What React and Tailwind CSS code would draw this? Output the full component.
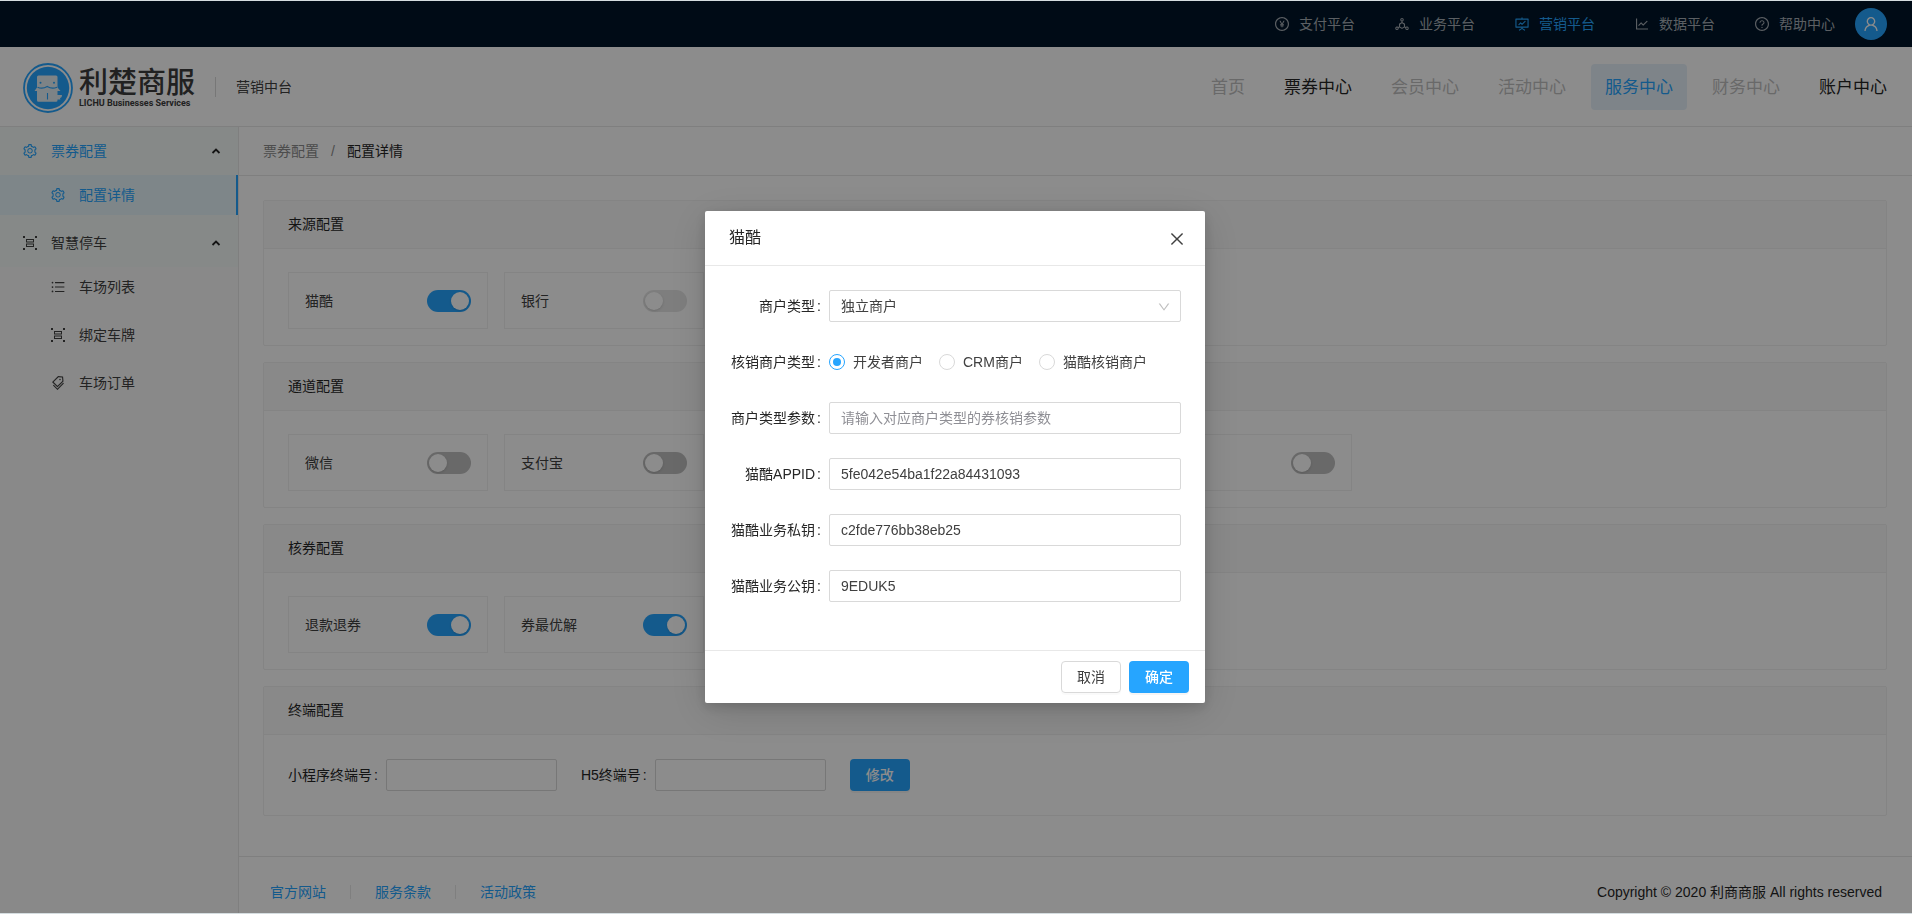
import { useState } from "react";
import {
  AiOutlineClose,
  AiOutlineDeploymentUnit,
  AiOutlineDown,
  AiOutlineFundProjectionScreen,
  AiOutlineLineChart,
  AiOutlinePayCircle,
  AiOutlineQuestionCircle,
  AiOutlineSetting,
  AiOutlineTags,
  AiOutlineUnorderedList,
  AiOutlineUser,
} from "react-icons/ai";

// 车牌识别图标：四角定位点 + 两行条形
function PlateIcon({ className }) {
  return (
    <svg viewBox="0 0 16 16" className={className} fill="currentColor">
      <path d="M1 1h2v2H1zM13 1h2v2h-2zM1 13h2v2H1zM13 13h2v2h-2z" />
      <path d="M4 4h8v3.400H4zM5 5v1.400h6V5zM4 8.600h8V12H4zM5 9.600V11h6V9.600z" fillRule="evenodd" />
    </svg>
  );
}

const PLATFORMS = [
  { name: "支付平台", icon: AiOutlinePayCircle },
  { name: "业务平台", icon: AiOutlineDeploymentUnit },
  { name: "营销平台", icon: AiOutlineFundProjectionScreen, active: true },
  { name: "数据平台", icon: AiOutlineLineChart },
  { name: "帮助中心", icon: AiOutlineQuestionCircle },
];

const NAV = [
  { name: "首页", disabled: true },
  { name: "票券中心" },
  { name: "会员中心", disabled: true },
  { name: "活动中心", disabled: true },
  { name: "服务中心", active: true },
  { name: "财务中心", disabled: true },
  { name: "账户中心" },
];

const MENU = [
  {
    name: "票券配置",
    icon: AiOutlineSetting,
    active: true,
    items: [{ name: "配置详情", icon: AiOutlineSetting, active: true }],
  },
  {
    name: "智慧停车",
    icon: PlateIcon,
    items: [
      { name: "车场列表", icon: AiOutlineUnorderedList },
      { name: "绑定车牌", icon: PlateIcon },
      { name: "车场订单", icon: AiOutlineTags },
    ],
  },
];

const SECTIONS = [
  {
    title: "来源配置",
    switches: [
      { id: "maoku", name: "猫酷", on: true },
      { id: "bank", name: "银行", disabled: true },
    ],
  },
  {
    title: "通道配置",
    switches: [
      { id: "wechat", name: "微信" },
      { id: "alipay", name: "支付宝" },
      { id: "channel-3" },
      { id: "channel-4" },
      { id: "channel-5" },
    ],
  },
  {
    title: "核券配置",
    switches: [
      { id: "refund", name: "退款退券", on: true },
      { id: "best", name: "券最优解", on: true },
    ],
  },
];

const VERIFY_TYPES = ["开发者商户", "CRM商户", "猫酷核销商户"];

function Logo() {
  return (
    <a href="#" className="flex items-center gap-[6px] pt-[2px] text-[#3c3c3c]">
      <svg viewBox="0 0 50 50" className="size-[50px]">
        <circle cx="25" cy="25" r="24" fill="none" stroke="#26a5ff" strokeWidth="1.8" />
        <circle cx="25" cy="25" r="21.2" fill="#26a5ff" />
        <path
          fill="#e4eef4"
          d="M15.500 12.500h17.500a1.500 1.500 0 0 1 1.500 1.500v10.500l3 3.500h-3v4h4.500c0 2-.8 2.700-2 3l.4 1.500h-2.900v.7a1.500 1.500 0 0 1-1.500 1.500H15.500a1.500 1.500 0 0 1-1.500-1.500V28h-2.500l2.500-3.500V14a1.500 1.500 0 0 1 1.500-1.500z"
        />
        <circle cx="17.500" cy="19.800" r="1" fill="#26a5ff" />
        <circle cx="31" cy="19.800" r="1" fill="#26a5ff" />
        <path
          d="M14.500 24.200c3.500 1.500 6.500 1.200 9.700-.7 3.200 1.900 6.300 2.200 9.800.7M24.500 30v6.500"
          fill="none"
          stroke="#26a5ff"
          strokeWidth="1.100"
        />
      </svg>
      <span className="flex flex-col">
        <span className="text-[29px] leading-[32px] font-medium">利楚商服</span>
        <span className="font-[Roboto,sans-serif] text-[9px] leading-[9px] font-bold">LICHU Businesses Services</span>
      </span>
    </a>
  );
}

function Chevron() {
  return (
    <svg viewBox="0 0 10 6" className="h-[6px] w-[10px] text-[#262626]">
      <path d="M1.500 5 5 1.500 8.500 5" fill="none" stroke="currentColor" strokeWidth="1.800" />
    </svg>
  );
}

function TopBar() {
  return (
    <div className="flex h-[46px] shrink-0 items-center justify-end gap-10 bg-[#001529] pr-[25px]">
      {PLATFORMS.map(({ name, icon: Icon, active }) => (
        <a
          key={name}
          href="#"
          className={`flex items-center gap-[10px] ${active ? "text-[#26a5ff]" : "text-[#a6adb4]"}`}
        >
          <Icon className="-m-px size-4" />
          {name}
        </a>
      ))}
      <button
        aria-label="用户"
        className="-ml-5 flex size-8 items-center justify-center rounded-full bg-[#26a5ff] text-lg text-white"
      >
        <AiOutlineUser />
      </button>
    </div>
  );
}

function Header() {
  return (
    <header className="flex h-20 shrink-0 items-center border-b border-[#e8e8e8] bg-white pr-[11px] pl-[23px]">
      <Logo />
      <span className="ml-5 h-5 w-px bg-[#d9d9d9]" />
      <span className="ml-5 text-[#404040]">营销中台</span>
      <nav className="ml-auto flex gap-[11px] text-[17px]">
        {NAV.map(({ name, active, disabled }) => (
          <a
            key={name}
            href="#"
            className={`flex h-[46px] items-center rounded px-[14px] pt-[2px] ${
              active ? "bg-[#e6f1fa] text-[#26a5ff]" : disabled ? "text-[#bfbfbf]" : "text-[#262626]"
            }`}
          >
            {name}
          </a>
        ))}
      </nav>
    </header>
  );
}

function Sidebar() {
  return (
    <aside className="w-[239px] shrink-0 border-r border-[#e8e8e8] bg-[#fafafa]">
      {MENU.map(({ name, icon: Icon, active, items }) => (
        <div key={name}>
          <button
            className={`flex h-12 w-full items-center bg-[#f4faf8] pr-[17px] pl-[23px] ${
              active ? "text-[#26a5ff]" : "text-[#404040]"
            }`}
          >
            <Icon className="-m-px size-4" />
            <span className="mr-auto ml-[14px]">{name}</span>
            <Chevron />
          </button>
          <ul className={active ? "bg-[#f4faf8] pb-1" : "flex flex-col gap-2"}>
            {items.map((item) => (
              <li key={item.name}>
                <a
                  href="#"
                  className={`flex h-10 items-center gap-[14px] pl-[51px] ${
                    item.active ? "border-r-2 border-[#26a5ff] bg-[#e6f5f9] text-[#26a5ff]" : "text-[#404040]"
                  }`}
                >
                  <item.icon className="-m-px size-4" />
                  {item.name}
                </a>
              </li>
            ))}
          </ul>
        </div>
      ))}
    </aside>
  );
}

function Switch({ on, disabled }) {
  let track = "bg-[#bfbfbf]";
  if (on) track = "bg-[#26a5ff]";
  if (disabled) track = "bg-[#e5e5e5]";
  return (
    <span className={`flex h-[22px] w-11 items-center rounded-full p-[2px] ${track}`}>
      <span className={`size-[18px] rounded-full bg-white shadow-sm ${on ? "ml-auto" : ""}`} />
    </span>
  );
}

function SwitchBox({ name, on, disabled }) {
  const [checked, setChecked] = useState(!!on);
  return (
    <label className="flex h-[57px] w-[200px] items-center justify-between border border-[#f0f0f0] px-4 text-[#404040]">
      <span>{name}</span>
      <input
        type="checkbox"
        className="sr-only"
        checked={checked}
        disabled={disabled}
        onChange={(e) => setChecked(e.target.checked)}
      />
      <Switch on={checked} disabled={disabled} />
    </label>
  );
}

function Section({ title, children }) {
  return (
    <section className="rounded-xs border border-[#f0f0f0] bg-white">
      <h2 className="flex h-12 items-center border-b border-[#f0f0f0] bg-[#fafafa] px-6 pb-[2px] text-[#262626]">
        {title}
      </h2>
      {children}
    </section>
  );
}

function TerminalField({ id, label }) {
  return (
    <div className="flex items-center">
      <label htmlFor={id} className="text-[#262626]">
        {label}
        <span className="mr-2 ml-[2px]">:</span>
      </label>
      <input id={id} className="h-8 w-[171px] rounded-xs border border-[#d9d9d9] px-[11px]" />
    </div>
  );
}

function Footer() {
  return (
    <footer className="mt-auto flex h-[57px] items-center justify-between border-t border-[#e8e8e8] pt-[14px] pr-[30px] pl-[31px]">
      <div className="flex items-center gap-6 text-[#26a5ff]">
        <a href="#">官方网站</a>
        <span className="h-[14px] w-px bg-[#e8e8e8]" />
        <a href="#">服务条款</a>
        <span className="h-[14px] w-px bg-[#e8e8e8]" />
        <a href="#">活动政策</a>
      </div>
      <p className="text-[#262626]">Copyright © 2020 利商商服 All rights reserved</p>
    </footer>
  );
}

function FormRow({ id, label, children }) {
  return (
    <div className="flex h-8 items-center">
      <label htmlFor={id} className="w-[100px] shrink-0 text-right text-[#262626]">
        {label}
        <span className="mr-2 ml-[2px]">:</span>
      </label>
      {children}
    </div>
  );
}

function TextRow({ id, label, ...rest }) {
  return (
    <FormRow id={id} label={label}>
      <input
        id={id}
        className="h-8 min-w-0 flex-1 rounded-xs border border-[#d9d9d9] px-[11px] text-[#404040] placeholder:text-[#8f8f95]"
        {...rest}
      />
    </FormRow>
  );
}

function ConfigModal() {
  const [verifyType, setVerifyType] = useState(VERIFY_TYPES[0]);
  return (
    <div
      role="dialog"
      aria-label="猫酷"
      className="w-[500px] rounded-xs bg-white shadow-[0_4px_12px_rgba(0,0,0,0.15),0_8px_40px_rgba(0,0,0,0.15)]"
    >
      <div className="flex h-[55px] items-center justify-between border-b border-[#e8e8e8] pr-[19px] pl-6">
        <h3 className="text-base text-[#262626]">猫酷</h3>
        <button aria-label="关闭" className="pt-[2px] text-lg text-[#404040]">
          <AiOutlineClose />
        </button>
      </div>

      <form className="flex flex-col gap-6 px-6 pt-6 pb-12">
        <FormRow id="merchant-type" label="商户类型">
          <div className="relative flex-1">
            <select
              id="merchant-type"
              className="h-8 w-full appearance-none rounded-xs border border-[#d9d9d9] bg-white px-[11px] text-[#404040]"
            >
              <option>独立商户</option>
            </select>
            <AiOutlineDown className="pointer-events-none absolute top-[10px] right-[10px] size-[14px] text-[#bfbfbf]" />
          </div>
        </FormRow>
        <FormRow label="核销商户类型">
          <div className="flex gap-4">
            {VERIFY_TYPES.map((type) => (
              <label key={type} className="flex items-center gap-2 text-[#404040]">
                <input
                  type="radio"
                  name="verify-type"
                  checked={verifyType === type}
                  onChange={() => setVerifyType(type)}
                  className="size-4 appearance-none rounded-full border border-[#d9d9d9] bg-white bg-clip-content p-[3px] checked:border-[#26a5ff] checked:bg-[#26a5ff]"
                />
                {type}
              </label>
            ))}
          </div>
        </FormRow>
        <TextRow id="merchant-params" label="商户类型参数" placeholder="请输入对应商户类型的券核销参数" />
        <TextRow id="appid" label="猫酷APPID" defaultValue="5fe042e54ba1f22a84431093" />
        <TextRow id="private-key" label="猫酷业务私钥" defaultValue="c2fde776bb38eb25" />
        <TextRow id="public-key" label="猫酷业务公钥" defaultValue="9EDUK5" />
      </form>

      <div className="flex justify-end gap-2 border-t border-[#e8e8e8] px-4 py-[10px]">
        <button className="h-8 w-[60px] rounded border border-[#d9d9d9] text-[#404040] shadow-[0_2px_0_rgba(0,0,0,0.02)]">
          取消
        </button>
        <button className="h-8 w-[60px] rounded bg-[#26a5ff] font-medium text-white shadow-[0_2px_0_rgba(0,0,0,0.04)]">
          确定
        </button>
      </div>
    </div>
  );
}

export default function App() {
  return (
    <div className="flex min-h-screen flex-col border-y border-[#d5dde0] bg-white font-['Liberation_Sans','Noto_Sans_CJK_SC',sans-serif] text-[14px] leading-[22px]">
      <TopBar />
      <Header />
      <div className="flex flex-1">
        <Sidebar />
        <main className="flex min-w-0 flex-1 flex-col">
          <nav className="flex h-[49px] items-center gap-3 border-b border-[#e8e8e8] px-6">
            <a href="#" className="text-[#8c8c8c]">
              票券配置
            </a>
            <span className="text-[#8c8c8c]">/</span>
            <span className="text-[#262626]">配置详情</span>
          </nav>

          <div className="flex flex-col gap-4 pt-6 pr-[25px] pb-10 pl-6">
            {SECTIONS.map(({ title, switches }) => (
              <Section key={title} title={title}>
                <div className="flex flex-wrap gap-4 px-6 pt-[23px] pb-4">
                  {switches.map(({ id, ...item }) => (
                    <SwitchBox key={id} {...item} />
                  ))}
                </div>
              </Section>
            ))}
            <Section title="终端配置">
              <div className="flex flex-wrap items-center gap-6 px-6 pt-6 pb-6">
                <TerminalField id="mini-terminal" label="小程序终端号" />
                <TerminalField id="h5-terminal" label="H5终端号" />
                <button className="h-8 w-[60px] rounded bg-[#26a5ff] font-medium text-white shadow-[0_2px_0_rgba(0,0,0,0.04)]">
                  修改
                </button>
              </div>
            </Section>
          </div>

          <Footer />
        </main>
      </div>

      {/* 遮罩与弹窗 */}
      <div className="fixed inset-x-0 inset-y-px flex items-center justify-center bg-black/45 pr-[2px]">
        <ConfigModal />
      </div>
    </div>
  );
}
